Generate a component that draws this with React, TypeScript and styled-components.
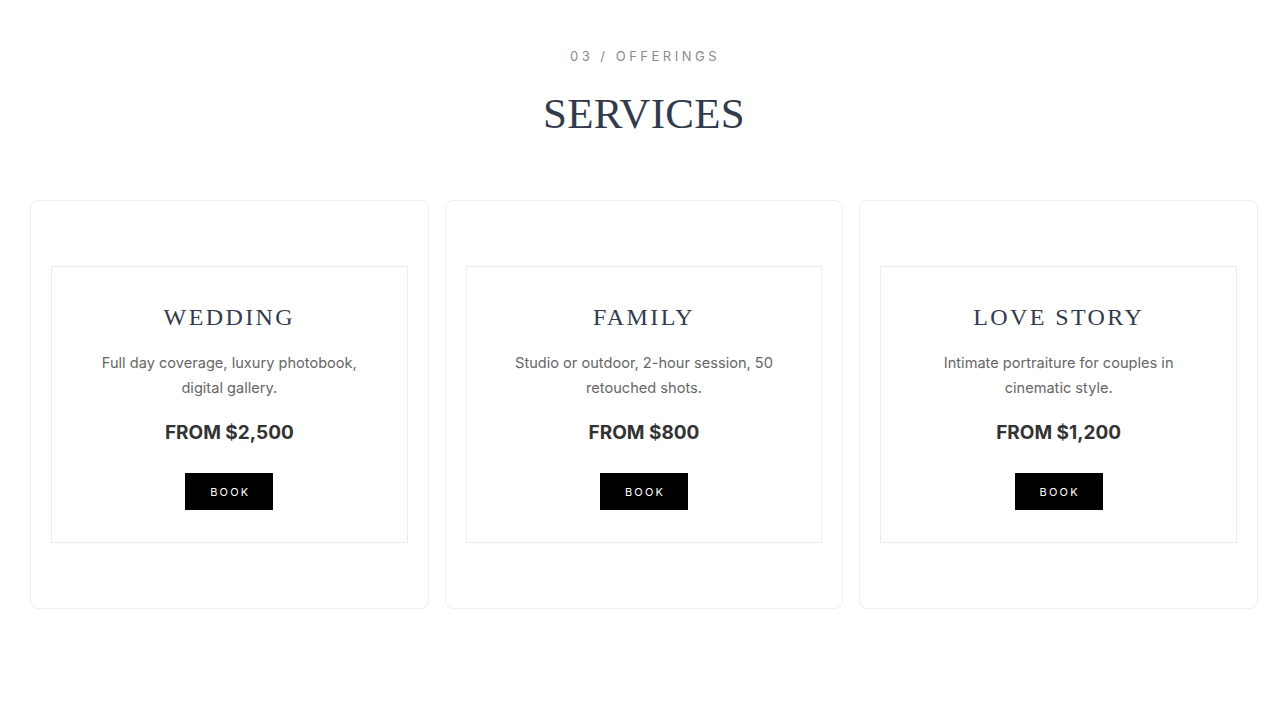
import React from 'react';
import styled, { createGlobalStyle } from 'styled-components';

type Service = {
    name: string;
    blurb: string;
    price: string;
};

const services: Array<Service> = [
    { name: 'Wedding', blurb: 'Full day coverage, luxury photobook, digital gallery.', price: 'FROM $2,500' },
    { name: 'Family', blurb: 'Studio or outdoor, 2-hour session, 50 retouched shots.', price: 'FROM $800' },
    { name: 'Love Story', blurb: 'Intimate portraiture for couples in cinematic style.', price: 'FROM $1,200' },
];

const GlobalStyle = createGlobalStyle`
    html, body {
        margin: 0;
        padding: 0;
        background: #ffffff;
    }
    body {
        font-family: Inter, 'Liberation Sans', sans-serif;
        -webkit-font-smoothing: antialiased;
    }
`;

const Section = styled.section`
    padding: 46px 30px 80px;
    display: flex;
    flex-direction: column;
    align-items: center;
`;

const Eyebrow = styled.div`
    font-family: Inter, 'Liberation Sans', sans-serif;
    font-size: 13px;
    line-height: 20px;
    letter-spacing: 3.5px;
    color: #8a8a8a;
    padding-left: 2px;
`;

const Heading = styled.h2`
    margin: 20px 0 0;
    font-family: 'Liberation Serif', 'Times New Roman', serif;
    font-weight: 400;
    font-size: 43px;
    line-height: 55px;
    letter-spacing: 0.3px;
    color: #323b4c;
`;

const Grid = styled.div`
    width: 100%;
    margin-top: 59px;
    display: grid;
    grid-template-columns: repeat(3, 1fr);
    gap: 16px;
`;

const Card = styled.div`
    min-height: 409px;
    box-sizing: border-box;
    padding: 0 20px;
    border: 1px solid #efefef;
    border-radius: 8px;
    display: flex;
    align-items: center;
`;

const Frame = styled.div`
    flex: 1;
    border: 1px solid #ececec;
    padding: 32px 40px;
    display: flex;
    flex-direction: column;
    align-items: center;
    text-align: center;
`;

const Title = styled.h3`
    margin: 0;
    font-family: 'Liberation Serif', 'Times New Roman', serif;
    font-weight: 400;
    font-size: 24px;
    line-height: 37px;
    letter-spacing: 2.4px;
    text-transform: uppercase;
    color: #323b4c;
`;

const Blurb = styled.p`
    margin: 15px 0 0;
    font-size: 14.6px;
    line-height: 25px;
    color: #666666;
`;

const Price = styled.div`
    margin-top: 18px;
    font-size: 19px;
    line-height: 28px;
    font-weight: 700;
    color: #333333;
`;

const BookButton = styled.button`
    margin-top: 26px;
    height: 37px;
    padding: 0 23px 0 25px;
    border: none;
    background: #000000;
    color: #ffffff;
    font-family: Inter, 'Liberation Sans', sans-serif;
    font-size: 11px;
    letter-spacing: 2.2px;
    cursor: pointer;
`;

const ServiceCard: React.FC<{ service: Service }> = ({ service }) => (
    <Card>
        <Frame>
            <Title>{service.name}</Title>
            <Blurb>{service.blurb}</Blurb>
            <Price>{service.price}</Price>
            <BookButton>BOOK</BookButton>
        </Frame>
    </Card>
);

export default function App() {
    return (
        <>
            <GlobalStyle />
            <Section>
                <Eyebrow>03 / OFFERINGS</Eyebrow>
                <Heading>SERVICES</Heading>
                <Grid>
                    {services.map((s) => (
                        <ServiceCard key={s.name} service={s} />
                    ))}
                </Grid>
            </Section>
        </>
    );
}
